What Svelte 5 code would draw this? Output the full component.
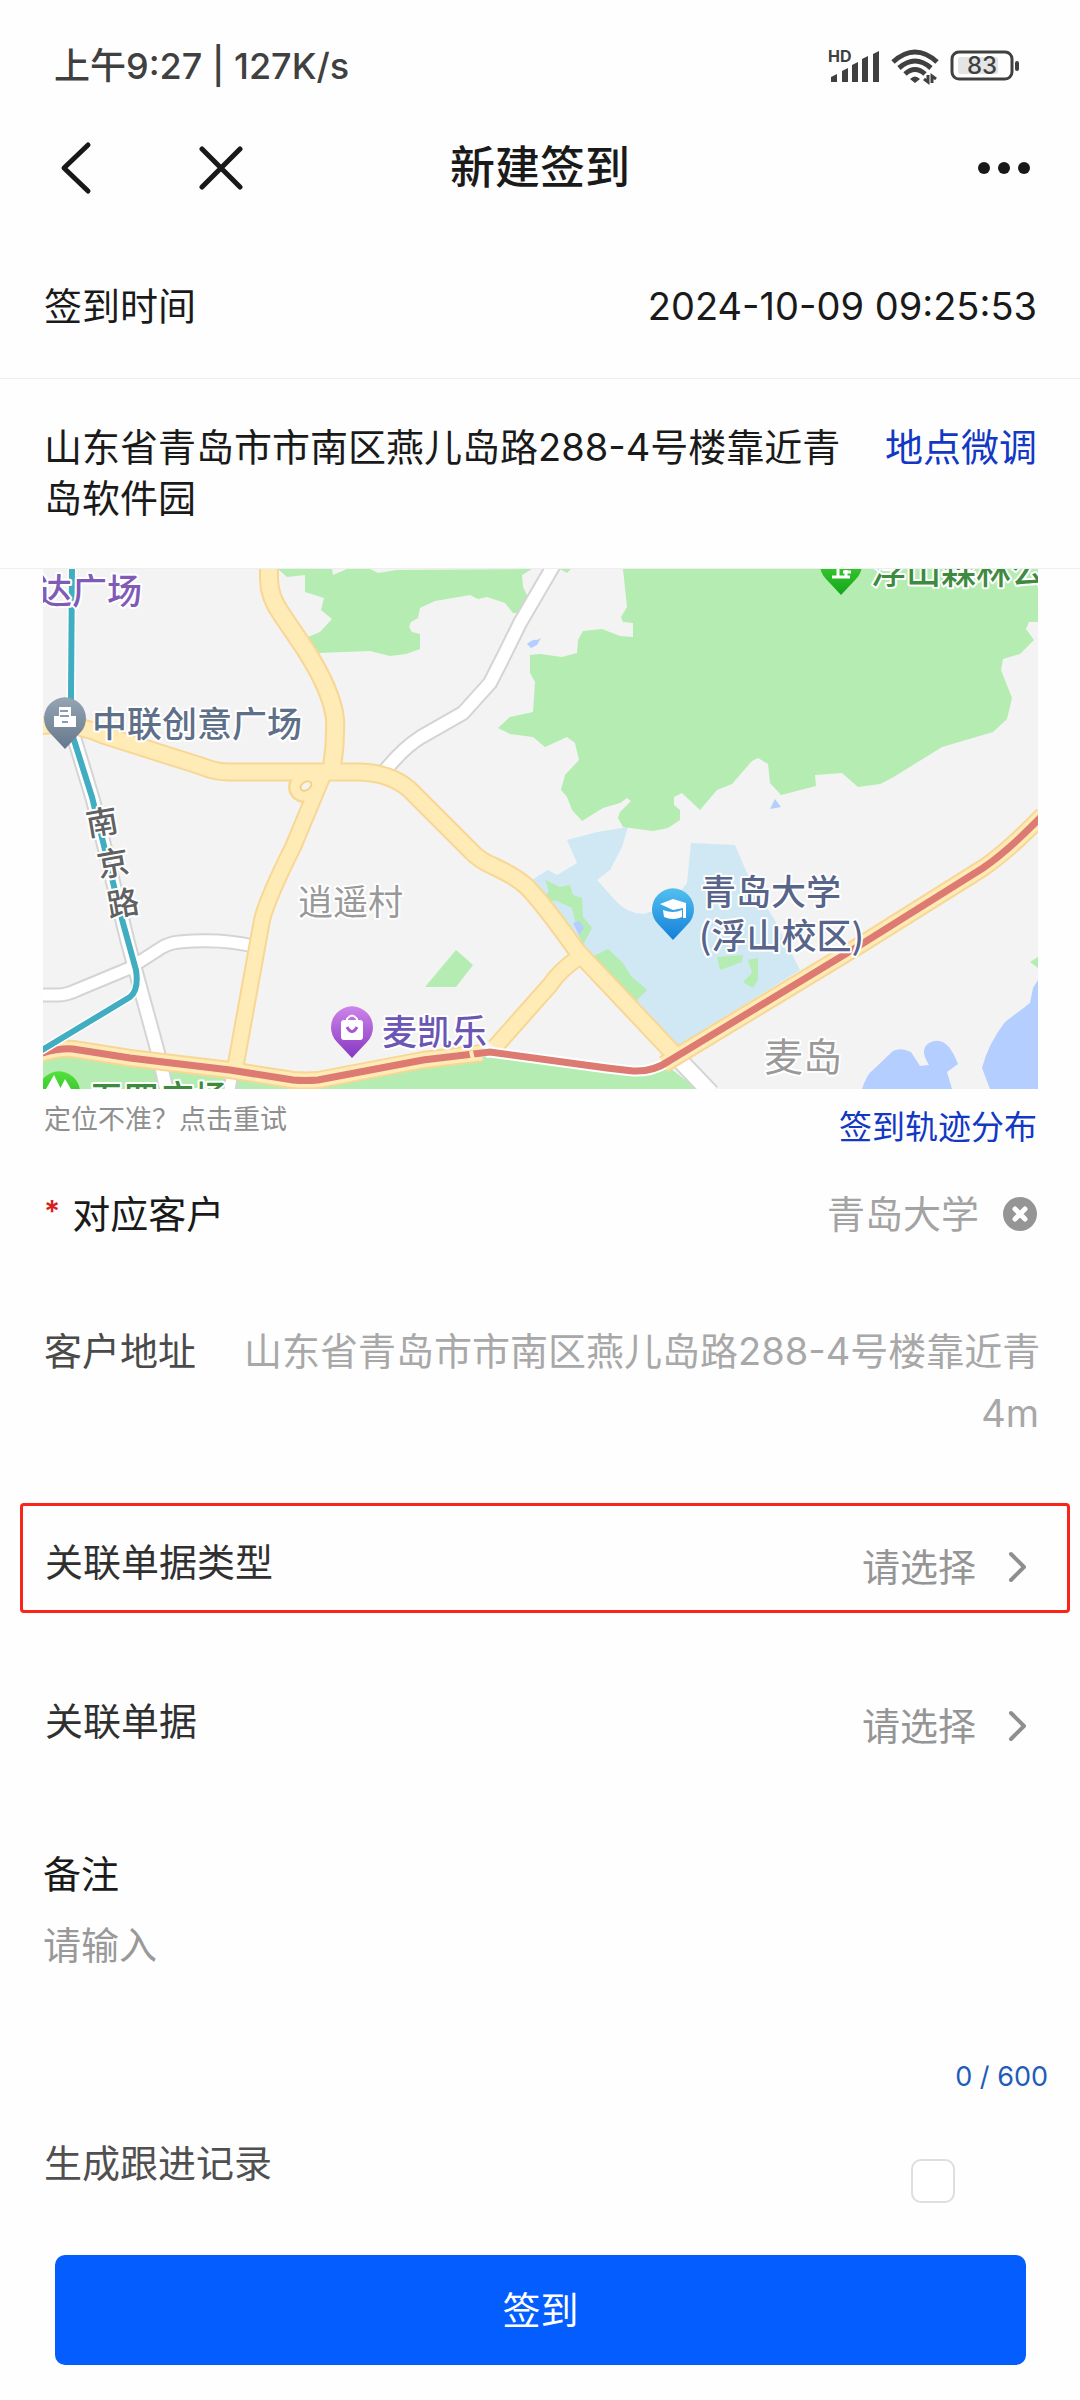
<script lang="ts">
	type Road = { d: string; width: number; kind: 'main' | 'minor' };

	const signTime = '2024-10-09 09:25:53';
	const address = '山东省青岛市市南区燕儿岛路288-4号楼靠近青岛软件园';
	const MAX_REMARK = 600;

	let customer = $state('青岛大学');
	let docType = $state('');
	let doc = $state('');
	let remark = $state('');
	let followUp = $state(false);

	// topmost road last
	const roads: Road[] = [
		{ kind: 'minor', width: 11, d: 'M-4 426H14Q24 426 34 421L87 399L118 379Q126 374 136 373Q180 369 214 378' },
		{ kind: 'minor', width: 12, d: 'M30 165L50 231L85 374L117 491L124 524' },
		{ kind: 'minor', width: 12, d: 'M340 204Q360 179 378 168L420 144L447 114Q462 85 477 54L512 -6' },
		{ kind: 'minor', width: 15, d: 'M626 480L668 524' },
		{ kind: 'minor', width: 10, d: 'M190 500L186 524' },
		{ kind: 'main', width: 14, d: 'M280 206L250 278Q224 330 219 351L192 500' },
		{ kind: 'main', width: 14, d: 'M452 478L507 416Q516 402 536 388' },
		{ kind: 'main', width: 15, d: 'M-4 157Q30 152 60 166L158 197Q172 203 187 203H317Q347 204 366 220L428 282Q436 291 450 297Q474 308 484 318Q500 334 534 382L632 486' },
		{ kind: 'main', width: 16, d: 'M226 -6V10Q226 28 239 46L262 80Q289 122 292 150Q293 176 288 204' }
	];

	const redLine = 'M-4 485Q15 479 30 480L87 489L187 501L250 511Q262 512 275 511L380 491L447 483L564 499L590 502Q610 503 626 492L814 378L940 299Q965 282 1000 246';

	const woods = [
		'235,0 244,8 262,6 262,23 281,29 278,41 289,50 277,63 265,68 275,84 327,82 347,87 363,85 377,80 377,65 369,63 366,58 368,53 375,49 377,39 392,32 427,26 435,30 444,28 462,34 470,44 479,44 485,28 480,18 479,6 489,0 354,1 335,4 327,0 304,0 290,6 289,0',
		'580,0 584,38 578,48 580,53 590,54 590,68 577,67 559,60 540,62 535,71 534,84 519,88 497,85 487,86 487,104 492,113 490,143 467,148 455,159 467,165 490,168 502,178 524,168 532,174 536,191 522,206 518,221 524,228 529,241 539,252 560,239 577,234 584,229 588,232 577,243 575,249 580,258 610,262 625,259 637,251 637,241 631,236 631,228 639,224 657,241 674,221 689,215 709,192 715,189 725,195 727,214 738,226 773,217 772,206 799,204 815,218 837,215 849,209 899,178 950,163 964,150 969,129 958,101 960,90 977,85 991,71 983,60 986,53 995,53 995,0',
		'517,0 524,4 528,0',
		'382,418 413,381 430,396 413,418',
		'987,393 995,388 995,399',
		'0,490 30,484 250,515 447,487 600,506 627,499 654,520 0,520'
	];
	const campusGreens = [
		'502,311 517,318 527,316 530,326 539,329 540,348 549,359 540,376 535,364 529,339 514,332 499,331 506,322',
		'549,388 565,380 580,394 588,407 604,421 594,431 600,448 576,426',
		'674,388 700,386 699,393 677,401',
		'705,391 715,389 715,411 710,419 700,413 709,404'
	];
	const seas = [
		'M819 520Q824 505 830 501L850 482Q858 478 868 483L877 497L886 496Q876 480 886 474Q897 468 906 478Q912 486 915 495L904 503L909 520Z',
		'M947 520L939 499Q945 475 962 453L987 434L990 419L995 411V520Z',
		'M484 75Q490 70 494 71L498 69L494 76L488 79Z',
		'M727 240L732 230L738 238Z',
		'M530 354L537 352L541 359L536 366Z'
	];
</script>

{#snippet pin(x: number, y: number, fill: string)}
	<path
		transform="translate({x} {y})"
		d="M0 31L-15 15A21 21 0 1 1 15 15Z"
		fill="url(#{fill})"
	/>
{/snippet}

{#snippet gradient(id: string, from: string, to: string)}
	<linearGradient {id} x1="0" y1="0" x2="0" y2="1">
		<stop offset="0" stop-color={from} />
		<stop offset="1" stop-color={to} />
	</linearGradient>
{/snippet}

{#snippet chevron()}
	<svg class="chevron" viewBox="0 0 20 32" width="20" height="32" aria-hidden="true">
		<path d="M3 3L16 16L3 29" fill="none" stroke="#8f8f8f" stroke-width="4" stroke-linecap="round" stroke-linejoin="round" />
	</svg>
{/snippet}

<div class="page">
	<div class="status">
		<span>上午9:27 | 127K/s</span>
		<div class="status-icons">
			<svg viewBox="0 0 52 40" width="52" height="40" aria-label="HD">
				<text x="0" y="16" class="hd">HD</text>
				<g fill="#404040">
					<path d="M3 36V31L9 28V36Z" />
					<path d="M14 36V25L20 22V36Z" />
					<path d="M24 36V19L30 16V36Z" />
					<path d="M34 36V13L40 10V36Z" />
					<path d="M45 36V8L51 5V36Z" />
				</g>
			</svg>
			<svg viewBox="0 -2 48 40" width="48" height="40" aria-hidden="true">
				<g fill="none" stroke="#404040" stroke-width="5">
					<path d="M2 14Q24 -6 46 14" />
					<path d="M8 20Q24 6 40 20" />
					<path d="M14 26Q24 17 34 26" />
				</g>
				<path d="M19 31Q24 26 29 31L24 35Z" fill="#404040" />
				<path d="M37 27V34L33 31M41 35V28L45 31" fill="none" stroke="#404040" stroke-width="3" />
			</svg>
			<svg viewBox="0 -2 70 40" width="70" height="40" aria-label="83%">
				<rect x="2" y="4" width="60" height="27" rx="7" fill="none" stroke="#404040" stroke-width="3" />
				<rect x="8" y="9" width="40" height="17" rx="2" fill="#e4e4e4" />
				<rect x="65" y="13" width="4" height="10" rx="2" fill="#404040" />
				<text x="32" y="26" text-anchor="middle" class="battery">83</text>
			</svg>
		</div>
	</div>

	<header class="nav">
		<div class="nav-left">
			<button type="button" aria-label="返回">
				<svg viewBox="0 0 32 54" width="32" height="54">
					<path d="M28 4L4 27L28 50" fill="none" stroke="#181818" stroke-width="5" stroke-linecap="round" stroke-linejoin="round" />
				</svg>
			</button>
			<button type="button" aria-label="关闭">
				<svg viewBox="0 0 44 44" width="44" height="44">
					<path d="M3 3L41 41M41 3L3 41" fill="none" stroke="#181818" stroke-width="5" stroke-linecap="round" />
				</svg>
			</button>
		</div>
		<h1>新建签到</h1>
		<button type="button" class="more" aria-label="更多">
			<svg viewBox="0 0 52 12" width="52" height="12">
				<circle cx="6" cy="6" r="6" />
				<circle cx="26" cy="6" r="6" />
				<circle cx="46" cy="6" r="6" />
			</svg>
		</button>
	</header>

	<div class="row time">
		<span>签到时间</span>
		<span>{signTime}</span>
	</div>

	<div class="row place">
		<span class="place-text">{address}</span>
		<a href="#adjust">地点微调</a>
	</div>

	<svg class="map" viewBox="0 0 995 520" role="img" aria-label="地图">
		<defs>
			{@render gradient('pin-grey', '#94a4b3', '#66788c')}
			{@render gradient('pin-blue', '#52bff0', '#1480d8')}
			{@render gradient('pin-purple', '#cf83ea', '#8438c0')}
			{@render gradient('pin-green', '#55e03c', '#12a51c')}
		</defs>
		<rect width="995" height="520" fill="#f3f3f3" />

		<path
			fill="#d0e8f4"
			d="M524 271L554 263L585 258L579 278L567 301L554 311L572 331Q583 344 600 345L625 338L644 314L648 274L692 276L704 304L718 330L730 348L757 401L630 480L534 384L484 314L505 301L514 306L534 294Z"
		/>
		{#each [...woods, ...campusGreens] as points}
			<polygon {points} fill="#b4ecb1" />
		{/each}
		{#each seas as d}
			<path {d} fill="#b3ceff" />
		{/each}

		{#each ['minor', 'main'] as kind}
			<g class="case-{kind}">
				{#each roads.filter((r) => r.kind === kind) as road}
					<path d={road.d} stroke-width={road.width + 4} />
				{/each}
				{#if kind === 'main'}
					<path d={redLine} stroke-width="18" stroke-dasharray="448 184 1000" />
					<circle cx="261" cy="218" r="10" stroke-width="12" />
				{/if}
			</g>
			<g class="fill-{kind}">
				{#each roads.filter((r) => r.kind === kind) as road}
					<path d={road.d} stroke-width={road.width} />
				{/each}
				{#if kind === 'main'}
					<path d={redLine} stroke-width="14" stroke-dasharray="448 184 1000" />
					<circle cx="261" cy="218" r="9" stroke-width="9" />
				{/if}
			</g>
		{/each}
		<ellipse cx="263" cy="217" rx="6" ry="4" transform="rotate(-35 263 217)" fill="#f3f3f3" stroke="#f5d286" stroke-width="2" />

		<path d={redLine} fill="none" stroke="#fff" stroke-width="11" stroke-dasharray="0 452 180 1000" />
		<path d={redLine} fill="none" stroke="#dd7a72" stroke-width="7" />
		<path d="M428 482L430 491" stroke="#ffebb5" stroke-width="4" />

		<g fill="none">
			<path d="M29 -4L28 128L30 168L49 228L80 354L93 401Q96 421 87 428L-4 483" stroke="#fff" stroke-width="9" />
			<path d="M29 -4L28 128L30 168L49 228L80 354L93 401Q96 421 87 428L-4 483" stroke="#41adc0" stroke-width="6" />
		</g>

		{@render pin(22, 149, 'pin-grey')}
		<path d="M11 158V147H16V138H28V147H33V158Z" fill="#fff" />
		<path d="M17 142H25M17 147H26M19 153H25" stroke="#8b9bab" stroke-width="2" />
		{@render pin(798, -5, 'pin-green')}
		<path d="M789 8H807M795 8V-4M789 -2H798M803 8V1M800 3H808" stroke="#fff" stroke-width="3" />
		{@render pin(630, 340, 'pin-blue')}
		<path d="M617 335L630 330L643 334V349H640V339L630 341ZM620 341Q630 345 639 341V348Q630 352 621 348Z" fill="#fff" />
		{@render pin(309, 458, 'pin-purple')}
		<rect x="298" y="451" width="22" height="20" rx="3" fill="#fff" />
		<path d="M304 452V450Q309 443 314 450V452" fill="none" stroke="#fff" stroke-width="2" />
		<path d="M304 458Q309 467 314 458" fill="none" stroke="#a856d2" stroke-width="3" />
		{@render pin(16, 523, 'pin-green')}
		<path d="M3 520L11 506L18 520ZM17 520L22 510L28 520Z" fill="#fff" />

		<g class="poi">
			<text x="-6" y="35" fill="#7f5bb8">达广场</text>
			<text x="49" y="168" fill="#5e6f89">中联创意广场</text>
			<text x="828" y="15" fill="#3e8a3e">浮山森林公园</text>
			<text x="658" y="336" fill="#57658a">青岛大学</text>
			<text x="656" y="380" fill="#57658a">(浮山校区)</text>
			<text x="339" y="476" fill="#6b55b5">麦凯乐</text>
			<text x="46" y="542" fill="#3e8a3e">五四广场</text>
		</g>
		<g class="poi road-name" fill="#5f6163">
			<text transform="translate(59 253) rotate(-10)" y="12">南</text>
			<text transform="translate(70 294) rotate(-10)" y="12">京</text>
			<text transform="translate(80 334) rotate(-10)" y="12">路</text>
		</g>
		<g class="poi area" fill="#999">
			<text x="255" y="346">逍遥村</text>
			<text x="721" y="502" class="large">麦岛</text>
		</g>
	</svg>

	<div class="map-foot">
		<button type="button" class="retry">定位不准？点击重试</button>
		<a href="#track">签到轨迹分布</a>
	</div>

	<div class="row customer">
		<span class="label"><i>*</i>对应客户</span>
		<span class="customer-value">
			{customer}
			<button type="button" aria-label="清除" onclick={() => (customer = '')}>
				<svg viewBox="0 0 34 34" width="34" height="34">
					<circle cx="17" cy="17" r="17" fill="#959595" />
					<path d="M12 12L22 22M22 12L12 22" stroke="#fff" stroke-width="5" stroke-linecap="round" />
				</svg>
			</button>
		</span>
	</div>

	<div class="customer-address">
		<span>客户地址</span>
		<div class="address-value">
			<div class="clip">{address}</div>
			<div class="distance">4m</div>
		</div>
	</div>

	<div class="picker highlight">
		<label for="doc-type">关联单据类型</label>
		<div class="picker-value">
			<select id="doc-type" bind:value={docType}>
				<option value="">请选择</option>
			</select>
			{@render chevron()}
		</div>
	</div>

	<div class="picker">
		<label for="doc">关联单据</label>
		<div class="picker-value">
			<select id="doc" bind:value={doc}>
				<option value="">请选择</option>
			</select>
			{@render chevron()}
		</div>
	</div>

	<div class="remark">
		<label for="remark">备注</label>
		<textarea id="remark" placeholder="请输入" maxlength={MAX_REMARK} bind:value={remark}></textarea>
		<div class="counter">{remark.length} / {MAX_REMARK}</div>
	</div>

	<div class="follow">
		<label for="follow">生成跟进记录</label>
		<input id="follow" type="checkbox" bind:checked={followUp} />
	</div>

	<button type="button" class="submit">签到</button>
</div>

<style>
	:global(body) {
		background: #fefefe;
	}
	.page {
		color: #1a1a1a;
		font-family: Inter, 'Noto Sans CJK SC', sans-serif;
		font-size: 38px;
		line-height: 50px;
		padding-bottom: 35px;
	}
	button,
	select,
	textarea {
		margin: 0;
		padding: 0;
		border: 0;
		background: none;
		color: inherit;
		font: inherit;
	}
	button {
		cursor: pointer;
	}
	button svg {
		display: block;
	}
	a {
		color: #1238c4;
		text-decoration: none;
	}

	.status {
		display: flex;
		align-items: center;
		justify-content: space-between;
		height: 132px;
		padding: 0 60px 0 54px;
		color: #404040;
		font-size: 36px;
		font-weight: 500;
	}
	.status-icons {
		display: flex;
		gap: 11px;
	}
	.hd {
		font-size: 16px;
		font-weight: 700;
		fill: #404040;
	}
	.battery {
		font-size: 24px;
		font-weight: 500;
		fill: #404040;
	}

	.nav {
		display: grid;
		grid-template-columns: 1fr auto 1fr;
		align-items: center;
		height: 72px;
		margin-bottom: 30px;
		padding: 0 50px;
	}
	.nav-left {
		display: flex;
		align-items: center;
		gap: 107px;
		padding-left: 10px;
	}
	h1 {
		margin: 0;
		font-size: 45px;
		font-weight: 500;
	}
	.more {
		justify-self: end;
		fill: #181818;
	}

	.row {
		display: flex;
		justify-content: space-between;
		padding: 0 43px 0 44px;
	}
	.time {
		align-items: center;
		height: 144px;
		border-bottom: 1px solid #eee;
	}
	.place {
		gap: 36px;
		padding-top: 43px;
		padding-bottom: 44px;
		border-bottom: 1px solid #eee;
		line-height: 51px;
	}
	.place-text {
		flex: 1;
	}

	.map {
		display: block;
		width: calc(100% - 85px);
		margin: 0 42px 0 43px;
	}
	.case-minor,
	.case-main,
	.fill-minor,
	.fill-main {
		fill: none;
		stroke-linejoin: round;
	}
	.case-minor {
		stroke: #d4d4d6;
	}
	.fill-minor {
		stroke: #fff;
	}
	.case-main {
		stroke: #f8d794;
	}
	.fill-main {
		stroke: #ffebb5;
	}
	.poi {
		font-size: 35px;
		font-weight: 500;
		font-family: 'Noto Sans CJK SC', sans-serif;
		paint-order: stroke;
		stroke: #fff;
		stroke-width: 4px;
		stroke-linejoin: round;
	}
	.road-name {
		font-size: 32px;
		text-anchor: middle;
	}
	.area {
		font-weight: 400;
	}
	.large {
		font-size: 39px;
	}

	.map-foot {
		display: flex;
		align-items: flex-start;
		justify-content: space-between;
		padding: 0 43px 0 44px;
		font-size: 33px;
		line-height: 76px;
	}
	.retry {
		color: #8f8f8f;
		font-size: 27px;
		line-height: 62px;
	}

	.customer {
		align-items: center;
		height: 98px;
	}
	.label {
		display: flex;
		gap: 12px;
	}
	.label i {
		color: #d81e1e;
		font-size: 30px;
		font-style: normal;
		font-weight: 600;
		line-height: 44px;
	}
	.customer-value {
		display: flex;
		align-items: center;
		gap: 24px;
		color: #a3a3a3;
	}

	.customer-address {
		display: flex;
		gap: 48px;
		padding: 57px 41px 0 44px;
		color: #4a4a4a;
		line-height: 62px;
	}
	.address-value {
		flex: 1;
		min-width: 0;
		color: #a8a8a8;
	}
	.clip {
		overflow: hidden;
		white-space: nowrap;
	}
	.distance {
		text-align: right;
	}

	.picker {
		display: flex;
		align-items: flex-start;
		justify-content: space-between;
		margin: 49px 10px 0 20px;
		padding: 31px 39px 13px 22px;
		border: 3px solid transparent;
		color: #303030;
	}
	.highlight {
		margin-top: 59px;
		border-color: #fb2418;
		border-radius: 4px;
	}
	.picker-value {
		display: flex;
		align-items: center;
		gap: 31px;
		height: 60px;
		color: #959595;
	}
	select {
		appearance: none;
	}

	.remark {
		display: flex;
		flex-direction: column;
		padding: 77px 32px 0 43px;
	}
	textarea {
		height: 137px;
		margin-top: 21px;
		outline: none;
		resize: none;
	}
	textarea::placeholder {
		color: #999;
	}
	.counter {
		color: #1f5cb8;
		font-size: 27px;
		line-height: 40px;
		text-align: right;
	}

	.follow {
		display: flex;
		align-items: flex-start;
		justify-content: space-between;
		padding: 41px 125px 0 44px;
		color: #505050;
	}
	.follow input {
		appearance: none;
		width: 44px;
		height: 44px;
		margin: 21px 0 0;
		border: 2px solid #dedede;
		border-radius: 10px;
		background: #fff;
	}
	.follow input:checked {
		background: #045eff;
	}

	.submit {
		display: block;
		width: calc(100% - 109px);
		height: 110px;
		margin: 52px 54px 0 55px;
		border-radius: 10px;
		background: #045eff;
		color: #fff;
	}
</style>
